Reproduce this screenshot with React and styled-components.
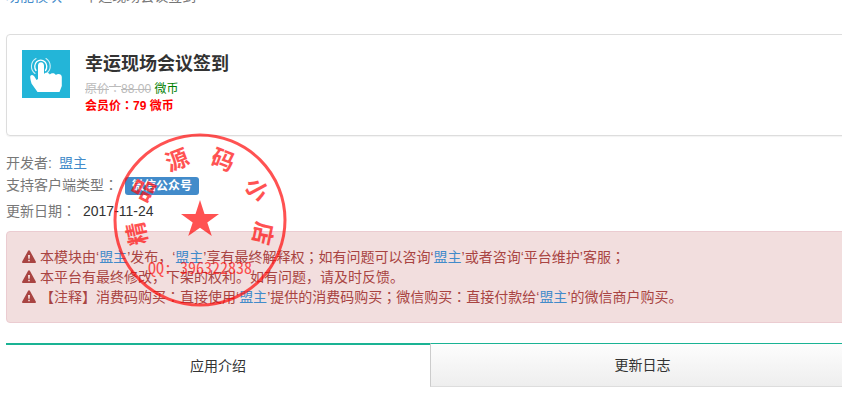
import React from 'react';
import styled, { createGlobalStyle } from 'styled-components';

const GlobalStyle = createGlobalStyle`
  * {
    box-sizing: border-box;
  }
  body {
    margin: 0;
    background: #fff;
    color: #333;
    font-family: "Liberation Sans", "Noto Sans CJK SC", sans-serif;
    font-size: 14px;
    line-height: 20px;
    overflow: hidden;
  }
  a {
    color: #428bca;
    text-decoration: none;
  }
`;

const stampLetters = [
  { char: '精', angle: -102 },
  { char: '品', angle: -62 },
  { char: '源', angle: -21 },
  { char: '码', angle: 21 },
  { char: '小', angle: 62 },
  { char: '店', angle: 102 },
];

function TouchIcon() {
  return (
    <svg width="48" height="48" viewBox="0 0 48 48" aria-hidden="true">
      <rect width="48" height="48" fill="#23b5d8" />
      <g fill="none" stroke="#fff" strokeLinecap="round">
        <path d="M14 20.500A6 6.500 0 1 1 23.500 20.500" strokeWidth="1.300" />
        <path d="M13 23.500A9 9 0 0 1 14 8.500" strokeWidth="1.100" opacity="0.800" />
        <path d="M24 8.500A9 9 0 0 1 25 23" strokeWidth="1.100" opacity="0.800" />
      </g>
      <path
        fill="#fff"
        d="M16 29V15.500C16 11 22 11 22 15.500V24C23 22.300 27 22.500 27.800 24.600C29.500 22.600 33 23 33.800 25C36 23 39.800 24 39.800 27V36L37.500 42H15.500L9.500 33.500C8.500 30 8 27.500 8.300 26C9.500 24.200 12 25 13 27.500L14.500 30Z"
      />
    </svg>
  );
}

function WarningIcon() {
  return (
    <WarningSvg viewBox="0 0 14 14" aria-hidden="true">
      <path
        fillRule="evenodd"
        d="M7 0.200C7.500 0.200 7.800 0.500 8 0.900L13.900 11.800C14.200 12.600 13.800 13 13 13H1C0.200 13-0.200 12.600 0.100 11.800L6 0.900C6.200 0.500 6.500 0.200 7 0.200ZM6 5L6.300 8.800H7.700L8 5ZM6.200 9.800V11.300H7.800V9.800Z"
      />
    </WarningSvg>
  );
}

function Stamp() {
  return (
    <StampSvg viewBox="0 0 174 174" aria-label="精品源码小店">
      <circle cx="87" cy="87" r="85" />
      <polygon points="87,67 91.500,81 106,81 94.300,89.500 98.800,103 87,94.700 75.200,103 79.700,89.500 68,81 82.500,81" />
      {stampLetters.map(({ char, angle }) => (
        <StampLetter key={char} x="87" y="31" transform={`rotate(${angle} 87 87)`}>
          {char}
        </StampLetter>
      ))}
      <StampNumber x="87" y="141">QQ: 396322838</StampNumber>
    </StampSvg>
  );
}

function Owner() {
  return <a href="#owner">盟主</a>;
}

function App() {
  return (
    <>
      <GlobalStyle />
      <Page>
        <Breadcrumb>
          <a href="#modules">功能模块</a>
          <Separator>&gt;</Separator>
          <span>幸运现场会议签到</span>
        </Breadcrumb>

        <Card>
          <TouchIcon />
          <div>
            <Title>幸运现场会议签到</Title>
            <Price>
              <del>原价<Mark>：</Mark>88.00</del> <Unit>微币</Unit>
            </Price>
            <MemberPrice>会员价<Mark>：</Mark>79 微币</MemberPrice>
          </div>
        </Card>

        <Details>
          <dt>开发者:</dt>
          <dd><Owner /></dd>
        </Details>
        <Details $gap="6px">
          <dt>支持客户端类型<Mark>：</Mark></dt>
          <dd><Label>微信公众号</Label></dd>
        </Details>
        <Details $gap="10px">
          <dt>更新日期<Mark>：</Mark></dt>
          <dd>2017-11-24</dd>
        </Details>

        <Alert>
          <li>
            <WarningIcon />
            <span>
              本模块由‘<Owner />’发布，‘<Owner />’享有最终解释权<Mark>；</Mark>如有问题可以咨询‘<Owner />’或者咨询‘平台维护’客服<Mark>；</Mark>
            </span>
          </li>
          <li>
            <WarningIcon />
            <span>本平台有最终修改，下架的权利。如有问题，请及时反馈。</span>
          </li>
          <li>
            <WarningIcon />
            <span>
              【注释】消费码购买<Mark>：</Mark>直接使用‘<Owner />’提供的消费码购买<Mark>；</Mark>微信购买<Mark>：</Mark>直接付款给‘<Owner />’的微信商户购买。
            </span>
          </li>
        </Alert>

        <Tabs role="tablist">
          <Tab type="button" role="tab" aria-selected="true" $active>应用介绍</Tab>
          <Tab type="button" role="tab" aria-selected="false">更新日志</Tab>
        </Tabs>

        <Stamp />
      </Page>
    </>
  );
}

// the content column runs a little past the right edge of the window
const Page = styled.main`
  position: relative;
  margin: 0 -12px 0 6px;
`;

const Breadcrumb = styled.nav`
  display: flex;
  align-items: flex-end;
  height: 6px;
  overflow: hidden;
  margin-bottom: 28px;
  color: #777;
`;

const Separator = styled.span`
  padding: 0 7px;
  color: #ccc;
`;

// full-width colon and semicolon centred in their cell
const Mark = styled.span`
  font-family: "Noto Sans CJK JP", sans-serif;
  line-height: 1;
`;

const Card = styled.section`
  display: flex;
  gap: 15px;
  min-height: 102px;
  padding: 15px;
  margin-bottom: 17px;
  border: 1px solid #ddd;
  border-radius: 4px;
  box-shadow: 0 1px 1px rgba(0, 0, 0, 0.05);
  font-size: 12px;
  line-height: 17px;
`;

const Title = styled.h1`
  margin: 0 0 2px;
  font-size: 18px;
  line-height: 29px;
`;

const Price = styled.div`
  color: #bbb;
`;

const Unit = styled.span`
  color: green;
`;

const MemberPrice = styled.div`
  color: red;
  font-weight: bold;
`;

const Details = styled.dl`
  display: flex;
  align-items: flex-end;
  gap: 7px;
  margin: 0 0 ${(props) => props.$gap || '2px'};
  dt {
    color: #777;
  }
  dd {
    margin: 0;
  }
`;

const Label = styled.span`
  display: block;
  padding: 0 7px;
  border-radius: 3px;
  background: #428bca;
  color: #fff;
  font-size: 12px;
  font-weight: bold;
  line-height: 18px;
`;

const Alert = styled.ul`
  list-style: none;
  margin: 0 0 20px;
  padding: 15px;
  border: 1px solid #ebccd1;
  border-radius: 4px;
  background: #f2dede;
  color: #a94442;
  li {
    display: flex;
    align-items: center;
    gap: 4px;
  }
`;

const WarningSvg = styled.svg`
  width: 14px;
  height: 14px;
  fill: #a94442;
`;

const Tabs = styled.div`
  display: grid;
  grid-template-columns: 1fr 1fr;
`;

const Tab = styled.button`
  height: 44px;
  padding: 0;
  border-style: solid;
  border-width: ${(props) => (props.$active ? '2px 0 1px' : '1px 0 1px 1px')};
  border-color: ${(props) => (props.$active ? '#1ab394 #fff #fff' : '#1ab394 #ddd #ddd #ccc')};
  background: ${(props) => (props.$active ? '#fff' : 'linear-gradient(#fdfdfd, #eee)')};
  background-clip: padding-box;
  color: #333;
  font: inherit;
  cursor: pointer;
`;

const StampSvg = styled.svg`
  position: absolute;
  top: 133px;
  left: 107px;
  width: 174px;
  height: 174px;
  opacity: 0.7;
  fill: #ff0a0a;
  pointer-events: none;
  circle {
    fill: none;
    stroke: #ff0a0a;
    stroke-width: 3px;
  }
`;

const StampLetter = styled.text`
  font-family: "Noto Sans CJK SC", sans-serif;
  font-size: 23px;
  font-weight: bold;
  text-anchor: middle;
`;

const StampNumber = styled.text`
  font-family: "Noto Sans CJK SC", sans-serif;
  font-size: 16px;
  font-feature-settings: "hwid" 1;
  text-anchor: middle;
`;

export default App;
